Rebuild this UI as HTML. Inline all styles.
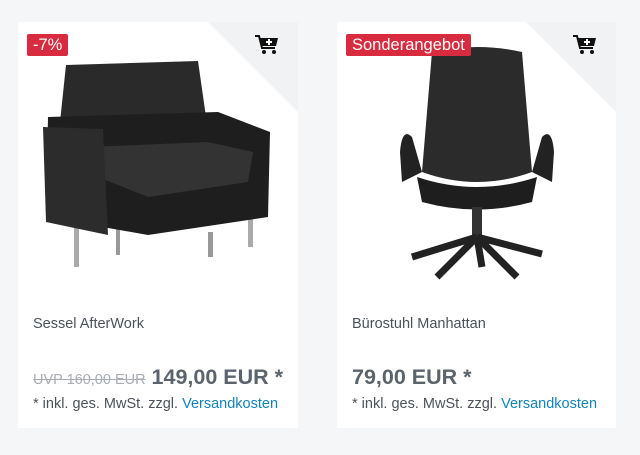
<!DOCTYPE html>
<html><head><meta charset="utf-8"><style>
body{margin:0;background:#f5f6f8;width:640px;height:455px;overflow:hidden;font-family:"Liberation Sans",sans-serif;position:relative}
.card{position:absolute;top:22px;width:280px;height:406px;background:#fff;overflow:hidden}
.fold{position:absolute;right:0;top:0;width:0;height:0;border-top:90px solid #f1f2f4;border-left:90px solid transparent}
.badge{position:absolute;top:12px;left:9px;background:#d92b3f;color:#fff;font-size:16.5px;line-height:22px;padding:0 6px;border-radius:2px;z-index:2}
.cart{position:absolute;top:13px;right:19px}
.name{position:absolute;left:15px;top:294px;font-size:14.5px;color:#4b525a}
.price{position:absolute;left:15px;top:343px;font-size:21.5px;font-weight:bold;color:#5b636c}
.old{font-size:14.5px;font-weight:normal;color:#a7adb3;text-decoration:line-through}
.tax{position:absolute;left:15px;top:374px;font-size:14.5px;color:#4b525a}
.tax a{color:#0e84c0;text-decoration:none}
</style></head><body>
<div class="card" style="left:18px">
<div class="fold"></div>
<svg style="position:absolute;left:20px;top:35px" width="240" height="215" viewBox="0 0 240 215">
<rect x="36" y="170" width="5" height="40" fill="#aaa"/><rect x="78" y="160" width="4" height="38" fill="#999"/><rect x="210" y="160" width="5" height="30" fill="#aaa"/><rect x="170" y="175" width="5" height="25" fill="#999"/>
<path d="M28 8 L160 4 L168 60 L22 65 Z" fill="#2a2a2a"/>
<path d="M10 60 L180 55 L232 75 L230 160 L110 178 L8 160 Z" fill="#1e1e1e"/>
<path d="M50 90 L170 85 L215 95 L210 125 L110 140 L60 120Z" fill="#333"/>
<path d="M5 70 L65 72 L70 178 L8 165 Z" fill="#2c2c2c"/>
</svg>
<div class="badge">-7%</div>
<svg class="cart" width="24" height="20" viewBox="0 0 24 20"><path d="M0 1h4l3 12h13" stroke="#111" stroke-width="2" fill="none"/><path d="M5 3h18l-2 8H7z" fill="#111"/><path d="M14 4v6M11 7h6" stroke="#fff" stroke-width="2"/><circle cx="9" cy="17" r="2" fill="#111"/><circle cx="19" cy="17" r="2" fill="#111"/></svg>
<div class="name">Sessel AfterWork</div>
<div class="price"><span class="old">UVP 160,00 EUR</span> 149,00 EUR *</div>
<div class="tax">* inkl. ges. MwSt. zzgl. <a>Versandkosten</a></div>
</div>
<div class="card" style="left:337px;width:279px">
<div class="fold"></div>
<svg style="position:absolute;left:55px;top:20px" width="170" height="240" viewBox="0 0 170 240">
<path d="M40 10 Q85 0 130 10 L140 130 Q85 150 30 130 Z" fill="#2b2b2b"/>
<path d="M20 95 Q10 85 8 110 L10 140 L30 130 Z" fill="#222"/><path d="M150 95 Q160 85 162 110 L160 140 L140 130Z" fill="#222"/>
<path d="M25 135 Q85 155 145 135 L140 160 Q85 175 30 160Z" fill="#1e1e1e"/>
<rect x="80" y="165" width="10" height="30" fill="#333"/>
<path d="M85 195 L20 215 M85 195 L45 235 M85 195 L125 235 M85 195 L150 212 M85 195 L90 225" stroke="#222" stroke-width="7" fill="none"/>
</svg>
<div class="badge">Sonderangebot</div>
<svg class="cart" width="24" height="20" viewBox="0 0 24 20"><path d="M0 1h4l3 12h13" stroke="#111" stroke-width="2" fill="none"/><path d="M5 3h18l-2 8H7z" fill="#111"/><path d="M14 4v6M11 7h6" stroke="#fff" stroke-width="2"/><circle cx="9" cy="17" r="2" fill="#111"/><circle cx="19" cy="17" r="2" fill="#111"/></svg>
<div class="name">Bürostuhl Manhattan</div>
<div class="price">79,00 EUR *</div>
<div class="tax">* inkl. ges. MwSt. zzgl. <a>Versandkosten</a></div>
</div>
</body></html>
